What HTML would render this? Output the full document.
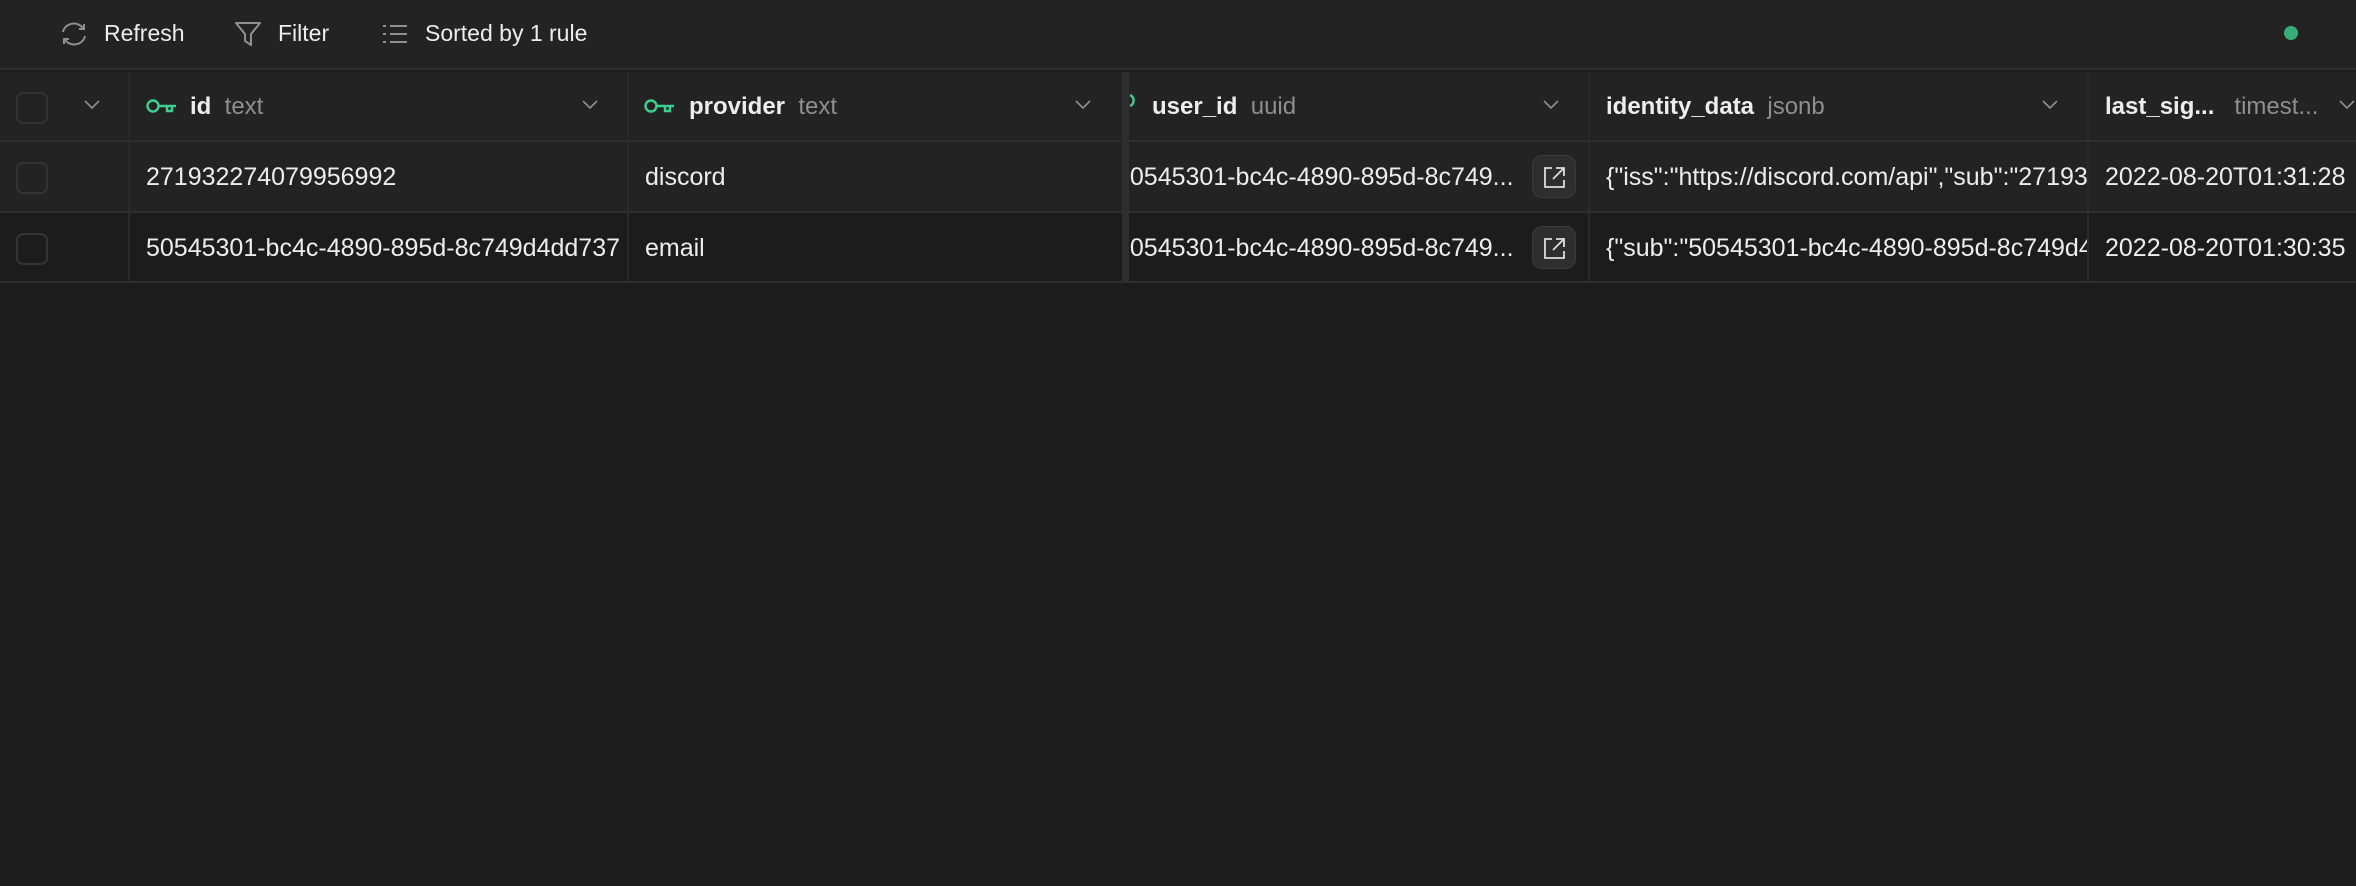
<!DOCTYPE html>
<html><head><meta charset="utf-8"><style>
*{box-sizing:border-box;margin:0;padding:0}
body{width:2356px;height:886px;background:#1c1c1c;font-family:"Liberation Sans",sans-serif;color:#ededed;overflow:hidden;position:relative}
.tb{position:absolute;left:0;top:0;width:2356px;height:70px;background:#232323;border-bottom:2px solid #2e2e2e}
.tb span{position:absolute;top:20px;font-size:23px;color:#ededed}
.row{position:absolute;left:0;width:2356px;height:71px;border-bottom:2px solid #2e2e2e}
.c{position:absolute;top:0;height:100%;border-right:2px solid #2a2a2a;overflow:hidden;white-space:nowrap}
.t{position:absolute;top:21px;font-size:25px}
.h{font-weight:bold;font-size:24px}
.m{color:#8f8f8f;font-weight:normal}
.cb{position:absolute;left:16px;top:20px;width:32px;height:32px;border:2px solid #333;border-radius:7px}
.chev{position:absolute;top:28px}
.btn{position:absolute;left:403px;top:13px;width:44px;height:43px;border-radius:10px;background:#2e2e2e;border:1px solid #3a3a3a}
</style></head><body>
<div class="tb">
<svg style="position:absolute;left:59px;top:21px" width="30" height="26" viewBox="0 0 30 26" fill="none" stroke="#8f8f8f" stroke-width="2"><path d="M4 11a11 10 0 0 1 20-4M25 3v5h-5M26 15a11 10 0 0 1-20 4M5 23v-5h5"/></svg>
<span style="left:104px">Refresh</span>
<svg style="position:absolute;left:235px;top:22px" width="26" height="24" viewBox="0 0 26 24" fill="none" stroke="#8f8f8f" stroke-width="2"><path d="M1 1h24l-9 11v11l-6-4v-7z"/></svg>
<span style="left:278px">Filter</span>
<svg style="position:absolute;left:383px;top:24px" width="24" height="20" viewBox="0 0 24 20" fill="none" stroke="#8f8f8f" stroke-width="2"><path d="M0 2h3M7 2h17M0 10h3M7 10h17M0 18h3M7 18h17"/></svg>
<span style="left:425px">Sorted by 1 rule</span>
<div style="position:absolute;left:2284px;top:26px;width:14px;height:14px;border-radius:50%;background:#3ecf8e;opacity:.8"></div>
</div>

<div class="row" style="top:72px;background:#232323;height:70px">
<div class="c" style="left:0;width:130px"><div class="cb"></div><svg class="chev" style="left:84px" width="16" height="10" viewBox="0 0 16 10" fill="none" stroke="#8f8f8f" stroke-width="1.6"><path d="M1 1l7 7 7-7"/></svg></div>
<div class="c" style="left:130px;width:499px"><svg style="position:absolute;left:16px;top:27px" width="32" height="16" viewBox="0 0 32 16" fill="none" stroke="#3ecf8e" stroke-width="2.4"><circle cx="7" cy="7" r="5.5"/><path d="M13 7h17M21 7v5h5V7"/></svg><span class="t h" style="left:60px">id <span class="m">&nbsp;text</span></span><svg class="chev" style="left:452px" width="16" height="10" viewBox="0 0 16 10" fill="none" stroke="#8f8f8f" stroke-width="1.6"><path d="M1 1l7 7 7-7"/></svg></div>
<div class="c" style="left:629px;width:500px;border-right:7px solid #2e2e2e"><svg style="position:absolute;left:15px;top:27px" width="32" height="16" viewBox="0 0 32 16" fill="none" stroke="#3ecf8e" stroke-width="2.4"><circle cx="7" cy="7" r="5.5"/><path d="M13 7h17M21 7v5h5V7"/></svg><span class="t h" style="left:60px">provider <span class="m">&nbsp;text</span></span><svg class="chev" style="left:446px" width="16" height="10" viewBox="0 0 16 10" fill="none" stroke="#8f8f8f" stroke-width="1.6"><path d="M1 1l7 7 7-7"/></svg></div>
<div class="c" style="left:1129px;width:461px"><svg style="position:absolute;left:0;top:22px" width="8" height="14" viewBox="0 0 8 14" fill="none" stroke="#3ecf8e" stroke-width="2.4"><path d="M1 1a6 6 0 0 1 0 11"/></svg><span class="t h" style="left:23px">user_id <span class="m">&nbsp;uuid</span></span><svg class="chev" style="left:414px" width="16" height="10" viewBox="0 0 16 10" fill="none" stroke="#8f8f8f" stroke-width="1.6"><path d="M1 1l7 7 7-7"/></svg></div>
<div class="c" style="left:1590px;width:499px"><span class="t h" style="left:16px">identity_data <span class="m">&nbsp;jsonb</span></span><svg class="chev" style="left:452px" width="16" height="10" viewBox="0 0 16 10" fill="none" stroke="#8f8f8f" stroke-width="1.6"><path d="M1 1l7 7 7-7"/></svg></div>
<div class="c" style="left:2089px;width:267px;border:none"><span class="t h" style="left:16px">last_sig... <span class="m">&nbsp;&nbsp;timest...</span></span><svg class="chev" style="left:250px" width="16" height="10" viewBox="0 0 16 10" fill="none" stroke="#8f8f8f" stroke-width="1.6"><path d="M1 1l7 7 7-7"/></svg></div>
</div>

<div class="row" style="top:142px;background:#232323">
<div class="c" style="left:0;width:130px"><div class="cb"></div></div>
<div class="c" style="left:130px;width:499px"><span class="t" style="left:16px">271932274079956992</span></div>
<div class="c" style="left:629px;width:500px;border-right:7px solid #2e2e2e"><span class="t" style="left:16px">discord</span></div>
<div class="c" style="left:1129px;width:461px"><span class="t" style="left:-13px">50545301-bc4c-4890-895d-8c749...</span><div class="btn"><svg style="position:absolute;left:10px;top:10px" width="23" height="23" viewBox="0 0 23 23" fill="none" stroke="#ddd" stroke-width="1.8"><path d="M9 2H2v19h19v-7M13 2h8v8M21 2L10 13"/></svg></div></div>
<div class="c" style="left:1590px;width:499px"><span class="t" style="left:16px">{"iss":"https://discord.com/api","sub":"271932274079956992"}</span></div>
<div class="c" style="left:2089px;width:267px;border:none"><span class="t" style="left:16px">2022-08-20T01:31:28</span></div>
</div>

<div class="row" style="top:213px;background:#1c1c1c;height:70px">
<div class="c" style="left:0;width:130px"><div class="cb"></div></div>
<div class="c" style="left:130px;width:499px"><span class="t" style="left:16px">50545301-bc4c-4890-895d-8c749d4dd737</span></div>
<div class="c" style="left:629px;width:500px;border-right:7px solid #2e2e2e"><span class="t" style="left:16px">email</span></div>
<div class="c" style="left:1129px;width:461px"><span class="t" style="left:-13px">50545301-bc4c-4890-895d-8c749...</span><div class="btn"><svg style="position:absolute;left:10px;top:10px" width="23" height="23" viewBox="0 0 23 23" fill="none" stroke="#ddd" stroke-width="1.8"><path d="M9 2H2v19h19v-7M13 2h8v8M21 2L10 13"/></svg></div></div>
<div class="c" style="left:1590px;width:499px"><span class="t" style="left:16px">{"sub":"50545301-bc4c-4890-895d-8c749d4dd737"}</span></div>
<div class="c" style="left:2089px;width:267px;border:none"><span class="t" style="left:16px">2022-08-20T01:30:35</span></div>
</div>
</body></html>
